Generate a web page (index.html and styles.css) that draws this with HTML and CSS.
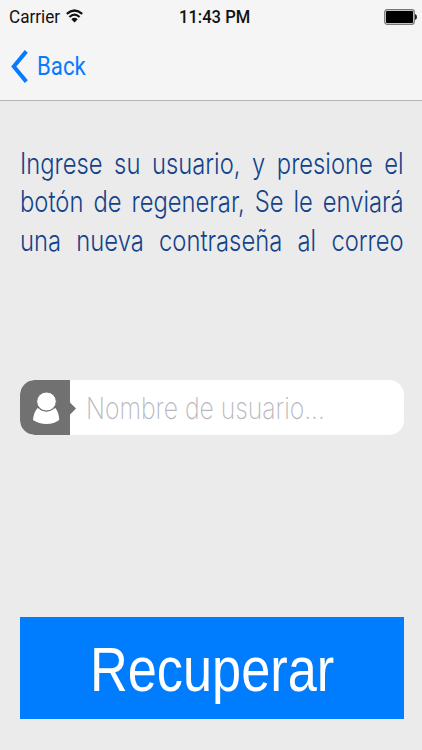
FILE: index.html
```
<!DOCTYPE html>
<html lang="es">
<head>
<meta charset="utf-8">
<title>Recuperar</title>
<link rel="stylesheet" href="styles.css">
</head>
<body>
<div class="screen">
  <header class="top">
    <div class="status">
      <div class="network"><span class="carrier">Carrier</span>
        <svg class="wifi" width="17" height="14" viewBox="0 0 17 14"><g fill="none" stroke="#111" stroke-width="2.200"><path d="M.8 4.9Q8.5-1.9 16.2 4.9"/><path d="M3.4 8Q8.5 3.4 13.6 8"/></g><path d="M5.3 10.2Q8.5 7.4 11.7 10.2L8.5 13.6Z" fill="#111"/></svg>
      </div>
      <span class="clock">11:43 PM</span>
      <svg class="battery" width="33" height="16" viewBox="0 0 33 16"><rect x=".7" y=".7" width="29.6" height="14.6" rx="2.5" fill="#ddd" stroke="#777" stroke-width="1.2"/><rect x="2" y="2" width="27" height="12" rx="1" fill="#000"/><path d="M31 5q2 .5 2 3t-2 3z" fill="#222"/></svg>
    </div>
    <a class="back">
      <svg width="17" height="33" viewBox="0 0 17 33"><path d="M15.3 1.4 2.8 16.5 15.3 31.6" fill="none" stroke="#087aff" stroke-width="4"/></svg>
      <span class="back-label">Back</span>
    </a>
  </header>
  <main class="content">
    <div class="message">
      <p>Ingrese su usuario, y presione el</p>
      <p>botón de regenerar, Se le enviará</p>
      <p>una nueva contraseña al correo</p>
    </div>
    <div class="field">
      <svg class="user" width="56" height="55" viewBox="0 0 56 55"><path d="M14 0H50V22.500L56 28.500 50 34.500V55H14Q0 54 0 40V15Q0 1 14 0Z" fill="#717171"/><path d="M17.500 28Q26 35 35.500 28Q39 33 39.200 40Q34 44 26.500 44T13 40Q13.500 33 17.500 28Z" fill="#fff"/><ellipse cx="26.500" cy="21.500" rx="9.800" ry="9.500" fill="#fff" stroke="#717171" stroke-width="1"/></svg>
      <span class="placeholder">Nombre de usuario...</span>
    </div>
    <div class="button"><span class="button-label">Recuperar</span></div>
  </main>
</div>
</body>
</html>
```
FILE: styles.css
```
* { box-sizing: border-box; }
body { margin: 0; font-family: "Liberation Sans", sans-serif; }
.screen { width: 422px; height: 750px; overflow: hidden; background: #ebebeb; }
.top { height: 101px; background: #f5f5f5; border-bottom: 1px solid #b5b5b5; }
.status { display: grid; grid-template-columns: 1fr auto 1fr; align-items: center; height: 33px; padding: 0 5px 0 9px; font: 18px/33px Roboto, sans-serif; color: #111; }
.network { display: flex; align-items: center; }
.carrier { width: 57px; white-space: nowrap; transform: scaleX(.95); transform-origin: left; }
.wifi { margin-top: -1px; }
.clock { width: 71px; font-weight: 500; white-space: nowrap; transform: translateX(1px) scaleX(.92); transform-origin: left; }
.battery { justify-self: end; }
.back { display: flex; align-items: center; height: 66px; padding-left: 11px; color: #087aff; }
.back-label { margin-left: 9px; font: 25.500px/66px Roboto, sans-serif; transform: scaleX(.87); transform-origin: left; }
.content { padding: 43px 18px 0 20px; }
.message { width: 476px; height: 236px; color: #12428a; font: 300 29.500px/38.300px Inter, sans-serif; transform: scaleX(.806); transform-origin: left; }
.message p { margin: 0; white-space: nowrap; text-align: justify; text-align-last: justify; }
.field { display: flex; height: 55px; border-radius: 15px; background: #fff; overflow: hidden; }
.user { flex: none; }
.placeholder { margin-left: 9px; color: #b8b8be; font: 200 30px/56px Inter, sans-serif; white-space: nowrap; transform: translateX(1px) scaleX(.825); transform-origin: left; }
.button { display: flex; align-items: center; justify-content: center; height: 102px; margin-top: 182px; background: #007cff; color: #fff; }
.button-label { font-size: 63px; line-height: 102px; transform: translateY(1px) scaleX(.83); }
```
